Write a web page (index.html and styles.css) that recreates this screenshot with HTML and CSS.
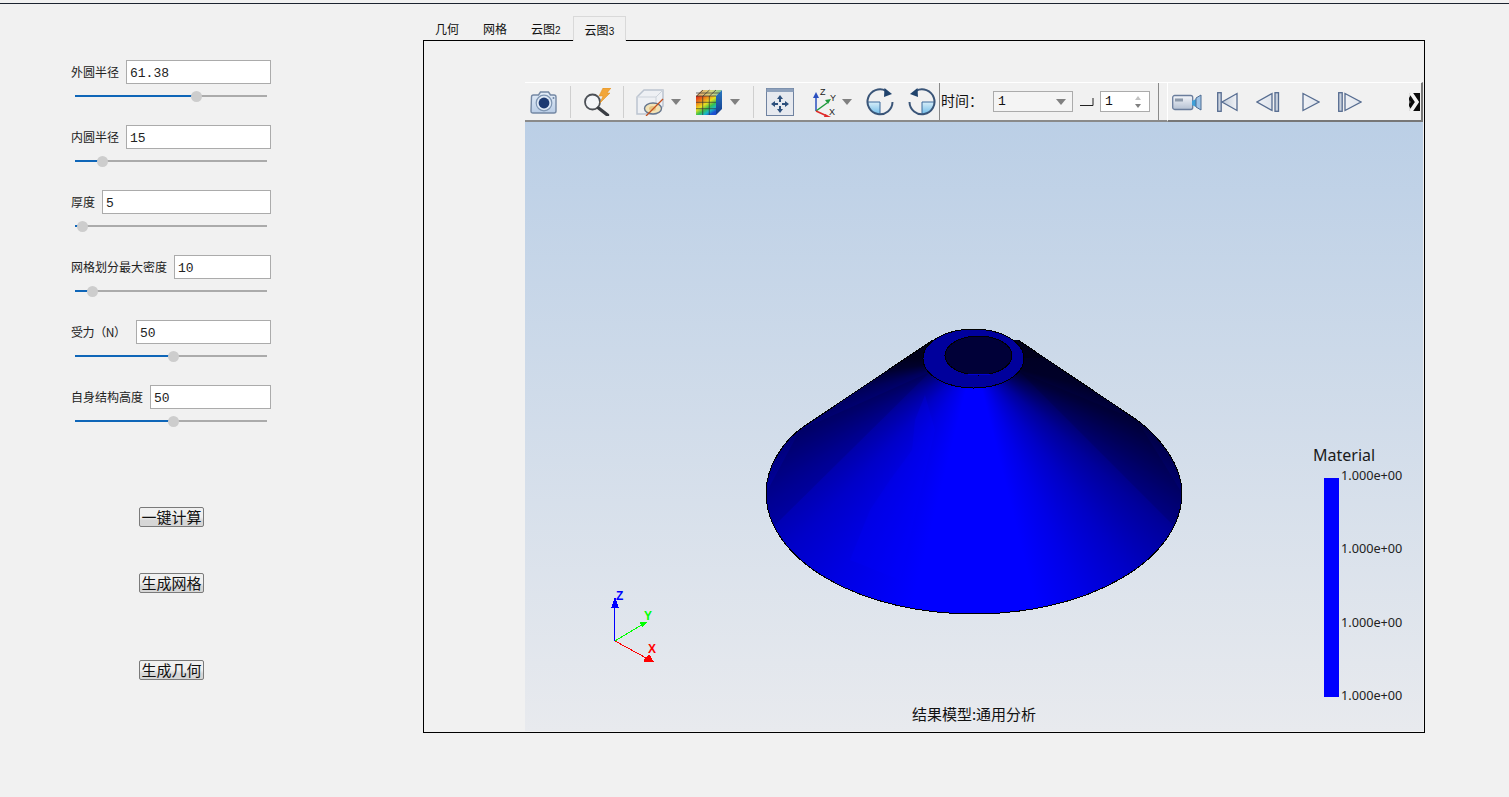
FILE: index.html
```html
<!DOCTYPE html>
<html lang="zh-CN">
<head>
<meta charset="utf-8">
<title>云图</title>
<link rel="stylesheet" href="styles.css">
</head>
<body>
<svg width="0" height="0" class="defs">
  <defs>
    <linearGradient id="gSteel" x1="0" y1="0" x2="0" y2="1"><stop offset="0" stop-color="#f4f6fa"/><stop offset="1" stop-color="#b4c0d2"/></linearGradient>
    <linearGradient id="gBody" x1="0" y1="0" x2="0" y2="1"><stop offset="0" stop-color="#e4edf8"/><stop offset="1" stop-color="#b9cde6"/></linearGradient>
    <linearGradient id="gQuad" x1="0" y1="0" x2="0" y2="1"><stop offset="0" stop-color="#d8eef9"/><stop offset="1" stop-color="#6dbbe8"/></linearGradient>
    <linearGradient id="gBg" x1="0" y1="0" x2="1" y2="0"><stop offset="0" stop-color="#c0cad8"/><stop offset="1" stop-color="#f0f2f6"/></linearGradient>
    <linearGradient id="gBgR" x1="0" y1="0" x2="1" y2="0"><stop offset="0" stop-color="#f0f2f6"/><stop offset="1" stop-color="#dfe4ec"/></linearGradient>
    <linearGradient id="gRain" x1="0" y1="0" x2=".7" y2="1"><stop offset="0" stop-color="#d8201c"/><stop offset=".3" stop-color="#f08a1a"/><stop offset=".5" stop-color="#e8e020"/><stop offset=".7" stop-color="#38c050"/><stop offset=".85" stop-color="#18b8c8"/><stop offset="1" stop-color="#1c50d0"/></linearGradient>
    <linearGradient id="gSide" x1="0" y1="0" x2="0" y2="1"><stop offset="0" stop-color="#2a78c0"/><stop offset="1" stop-color="#123a8c"/></linearGradient>
    <linearGradient id="gTop" x1="0" y1="0" x2="1" y2="0"><stop offset="0" stop-color="#eba060"/><stop offset=".6" stop-color="#d8d880"/><stop offset="1" stop-color="#78c890"/></linearGradient>
    <clipPath id="coneClip"><path d="M933 340L803 427C783 441 766 467 766 493A208 121 0 0 0 1182 493C1182 465 1160 437 1137 420L1018 340Z"/></clipPath>
  </defs>
</svg>
<div class="topline"></div>
<main class="app">
  <aside class="side">
    <section class="field">
      <div class="row"><label class="lbl">外圆半径</label><input class="num" value="61.38"></div>
      <div class="slider"><span class="fill" style="width:121px"></span><span class="thumb" style="left:116px"></span></div>
    </section>
    <section class="field">
      <div class="row"><label class="lbl">内圆半径</label><input class="num" value="15"></div>
      <div class="slider"><span class="fill" style="width:27px"></span><span class="thumb" style="left:22px"></span></div>
    </section>
    <section class="field">
      <div class="row"><label class="lbl">厚度</label><input class="num" value="5"></div>
      <div class="slider"><span class="fill" style="width:7px"></span><span class="thumb" style="left:2px"></span></div>
    </section>
    <section class="field">
      <div class="row"><label class="lbl">网格划分最大密度</label><input class="num" value="10"></div>
      <div class="slider"><span class="fill" style="width:17px"></span><span class="thumb" style="left:12px"></span></div>
    </section>
    <section class="field">
      <div class="row"><label class="lbl lbl-force">受力（N）</label><input class="num" value="50"></div>
      <div class="slider"><span class="fill" style="width:98px"></span><span class="thumb" style="left:93px"></span></div>
    </section>
    <section class="field">
      <div class="row"><label class="lbl">自身结构高度</label><input class="num" value="50"></div>
      <div class="slider"><span class="fill" style="width:98px"></span><span class="thumb" style="left:93px"></span></div>
    </section>
    <div class="actions">
      <button class="btn btn-calc">一键计算</button>
      <button class="btn btn-mesh">生成网格</button>
      <button class="btn btn-geo">生成几何</button>
    </div>
  </aside>

  <div class="work">
    <nav class="tabs">
      <span class="tab">几何</span>
      <span class="tab">网格</span>
      <span class="tab">云图<small>2</small></span>
      <span class="tab active">云图<small>3</small></span>
    </nav>
    <div class="panel">
      <div class="toolbar">
        <div class="tools">
          <svg class="ico ico-camera" viewBox="0 0 28 24"><path d="M1.500 7q0-2 2-2h5l2-3h8l2 3h3.500q2 0 2 2v14q0 2-2 2h-21q-2 0-2-2z" fill="url(#gBody)" stroke="#7488a4" stroke-width="1.400"/><circle cx="14" cy="13" r="7.800" fill="#dfe9f5" stroke="#7e95b2" stroke-width="1.200"/><circle cx="14" cy="13" r="5.400" fill="#1d3a72"/><circle cx="23.500" cy="8" r="1" fill="#6f86a5"/></svg>
          <i class="sep"></i>
          <svg class="ico" viewBox="0 0 28 28"><circle cx="9.500" cy="14" r="7.500" fill="#f3f5f8" stroke="#4c5056" stroke-width="1.800"/><path d="M15.500 20l9 7" stroke="#3a3e44" stroke-width="3.400" stroke-linecap="round"/><path d="M20 0h8l-4 5h3L17 15l3-7h-4z" fill="#f2a63a" stroke="#dd8a18" stroke-width=".5"/></svg>
          <i class="sep"></i>
          <svg class="ico" viewBox="0 0 28 28"><path d="M1 9l7-7h19v16l-7 8H1z" fill="#eef0f4" stroke="#bcc4d0" stroke-width="1.500"/><path d="M1 9h19v17M20 9l7-7" fill="none" stroke="#ccd2da"/><ellipse cx="17" cy="20.500" rx="8.500" ry="5.500" fill="#f2e2b6" stroke="#66768e" stroke-width="1.400"/><ellipse cx="16.500" cy="20.500" rx="3.500" ry="2.500" fill="#e7c484"/><path d="M10 28L27 11" stroke="#c4501e" stroke-width="1.300"/></svg>
          <svg class="drop" viewBox="0 0 10 6"><path d="M0 0h10L5 6z"/></svg>
          <svg class="ico ico-color" viewBox="0 0 28 28"><path d="M1 8l6-6h20l-6 6z" fill="url(#gTop)"/><path d="M21 8l6-6v19l-6 6z" fill="url(#gSide)"/><rect x="1" y="8" width="20" height="19" fill="url(#gRain)"/><path d="M7.700 8v19M14.300 8v19M1 14.300h20M1 20.700h20M1 8h20M8 2L1.700 8M14.500 2L8 8M21 2l-6.500 6M1 5h24" stroke="#333" stroke-width=".7" fill="none"/></svg>
          <svg class="drop" viewBox="0 0 10 6"><path d="M0 0h10L5 6z"/></svg>
          <i class="sep sep-wide"></i>
          <svg class="ico ico-fit" viewBox="0 0 28 28"><rect x=".5" y=".5" width="27" height="27" fill="#e6e9ef" stroke="#6f82a0"/><rect x=".5" y=".5" width="27" height="3.500" fill="#8ea1bc"/><path d="M14 7l-3 4h2v3h2v-3h2zM14 25l3-4h-2v-3h-2v3h-2zM5 16l4 3v-2h3v-2H9v-2zM23 16l-4-3v2h-3v2h3v2z" fill="#2c4f7c"/></svg>
          <svg class="ico ico-axes" viewBox="0 0 26 30"><path d="M5 24V10" stroke="#2a4fc0" stroke-width="1.500"/><path d="M5 5l-3 6h6z" fill="#2a4fc0"/><path d="M5 24l11-8" stroke="#1f9a3c" stroke-width="1.500"/><path d="M20 12l-6 1 3 4z" fill="#1f9a3c"/><path d="M5 24l11 5" stroke="#e02a2a" stroke-width="1.500"/><path d="M20 30l-6-3-1 3z" fill="#e02a2a"/><text x="9" y="8" class="axis-mini">Z</text><text x="19" y="14" class="axis-mini">Y</text><text x="18" y="28" class="axis-mini">X</text></svg>
          <svg class="drop drop-axes" viewBox="0 0 10 6"><path d="M0 0h10L5 6z"/></svg>
          <svg class="ico ico-rot" viewBox="0 0 28 28"><path d="M14 14H1.500A12.500 12.500 0 0 0 14 26.500z" fill="url(#gQuad)"/><path d="M1.500 14H14V26.500" fill="none" stroke="#3c6a9c"/><path d="M20 2.800A12.500 12.500 0 1 0 26.500 14" fill="none" stroke="#3a5578" stroke-width="2"/><path d="M26 6l-8 3 .5-9z" fill="#20436c"/></svg>
          <svg class="ico ico-rot" viewBox="0 0 28 28"><path d="M14 14h12.500A12.500 12.500 0 0 1 14 26.500z" fill="url(#gQuad)"/><path d="M26.500 14H14V26.500" fill="none" stroke="#3c6a9c"/><path d="M8 2.800A12.500 12.500 0 1 1 1.500 14" fill="none" stroke="#3a5578" stroke-width="2"/><path d="M2 6l8 3-.5-9z" fill="#20436c"/></svg>
        </div>
        <i class="sep-dark"></i>
        <div class="time">
          <span class="time-lbl">时间：</span>
          <div class="combo"><span>1</span><svg class="drop drop-in" viewBox="0 0 10 6"><path d="M0 0h10L5 6z"/></svg></div>
          <svg class="corner" viewBox="0 0 14 8"><path d="M0 7.500h13V0" fill="none" stroke="#222" stroke-width="1"/></svg>
          <div class="spin"><span>1</span><svg class="updown" viewBox="0 0 8 14"><path d="M4 1l3 4H1z" fill="#c2c2c2"/><path d="M4 13l3-4H1z" fill="#808080"/></svg></div>
        </div>
        <i class="sep-dark sep-end"></i>
        <div class="player">
          <svg class="ico ico-cam" viewBox="0 0 30 18"><rect x=".7" y="2.500" width="20" height="14" rx="2" fill="url(#gSteel)" stroke="#6a7d9c" stroke-width="1.300"/><rect x="3" y="5.500" width="8" height="3" fill="#8c99aa"/><path d="M20 8l4-2v8l-4-2z" fill="#3fa0d8"/><path d="M24 5l5-3v15l-5-3z" fill="#9ec3e6" stroke="#4f6c92"/></svg>
          <svg class="nav nav-first" viewBox="0 0 21 20"><rect x=".7" y=".7" width="3.500" height="18.600" fill="#c9d2de" stroke="#566c90" stroke-width="1.300"/><path d="M20 1.500v17L5 10z" fill="url(#gBg)" stroke="#566c90" stroke-width="1.300"/></svg>
          <svg class="nav nav-prev" viewBox="0 0 24 20"><path d="M16 1.500v17L1 10z" fill="url(#gBgR)" stroke="#566c90" stroke-width="1.300"/><rect x="19" y=".7" width="3.500" height="18.600" fill="#c9d2de" stroke="#566c90" stroke-width="1.300"/></svg>
          <svg class="nav nav-play" viewBox="0 0 18 20"><path d="M1 1.500v17L17 10z" fill="url(#gBgR)" stroke="#566c90" stroke-width="1.300"/></svg>
          <svg class="nav nav-next" viewBox="0 0 24 20"><rect x=".7" y=".7" width="3.500" height="18.600" fill="#c9d2de" stroke="#566c90" stroke-width="1.300"/><path d="M7 1.500v17L23 10z" fill="url(#gBgR)" stroke="#566c90" stroke-width="1.300"/></svg>
          <svg class="more" viewBox="0 0 11 18"><rect width="11" height="18" fill="#0c0c0c"/><path d="M0 0h3L0 5zM0 18h3l-3-5z" fill="#d8d8d8"/><path d="M0 7l2 2-2 2z" fill="#666"/><path d="M2 0l6 9-6 9" fill="none" stroke="#f4f4f4" stroke-width="3.600"/></svg>
        </div>
      </div>

      <div class="view">
        <div class="cone-shade"></div>
        <svg class="scene" viewBox="525 122 898 609">
          <g clip-path="url(#coneClip)">
            <path d="M930 372L800 430L766 493L772 528Z" class="facet-dark"/>
            <path d="M925 395L915 420L912 450L890 480L870 510L850 560L900 580L935 430Z" class="facet-light"/>
            <path d="M1020 372L1137 420L1182 493L1176 528Z" class="facet-dark"/>
          </g>
          <g class="mesh">
            <path d="M933 340L803 427C783 441 766 467 766 493A208 121 0 0 0 1182 493C1182 465 1160 437 1137 420L1018 340" fill="none" stroke="#000" stroke-width="1"/>
            <ellipse cx="973.500" cy="358.500" rx="50.500" ry="29.500" fill="#00009c" stroke="#000"/>
            <ellipse cx="978.500" cy="355.500" rx="33.500" ry="19.500" fill="#000038" stroke="#000"/>
            <path d="M968 374q10 1 22 0" fill="none" stroke="#0000d0"/>
          </g>
          <g class="triad">
            <path d="M614.500 641V604" stroke="#0000ff" stroke-width="1.200"/>
            <path d="M615 597l-4 11h8z" fill="#0000ff"/>
            <path d="M615 641l28-17" stroke="#00ff00"/>
            <path d="M647 622l-8-.500 3 6z" fill="#00ff00"/>
            <path d="M615 641l33 18" stroke="#ff0000"/>
            <path d="M654 662l-5-8-5 5v3z" fill="#ff0000"/>
          </g>
          <text x="616" y="600" class="ax ax-z">Z</text>
          <text x="644" y="620" class="ax ax-y">Y</text>
          <text x="648" y="653" class="ax ax-x">X</text>
        </svg>
        <div class="legend">
          <div class="legend-title">Material</div>
          <div class="legend-body">
            <div class="legend-bar"></div>
            <div class="legend-ticks">
              <span>1.000e+00</span><span>1.000e+00</span><span>1.000e+00</span><span>1.000e+00</span>
            </div>
          </div>
        </div>
        <div class="caption">结果模型:通用分析</div>
      </div>
    </div>
  </div>
</main>
</body>
</html>
```

FILE: styles.css
```css
* { box-sizing: border-box; }
html, body { margin: 0; height: 100%; overflow: hidden; }
body {
  background: #f1f1f1;
  color: #111;
  font-family: "Noto Sans CJK SC", "Liberation Sans", sans-serif;
  padding-top: 3px;
}
.defs { position: absolute; }
.topline { height: 1px; background: #1c2430; }
.app { display: flex; align-items: flex-start; }

/* left form */
.side { width: 423px; flex: none; padding: 56px 0 0 71px; display: flex; flex-direction: column; }
.field { width: 200px; margin-bottom: 23px; }
.row { display: flex; align-items: center; gap: 7px; height: 24px; }
.lbl { font-size: 12px; line-height: 24px; white-space: nowrap; color: #222; }
.lbl-force { width: 58px; letter-spacing: -.4px; }
.num {
  flex: 1; min-width: 0; height: 24px; padding: 2px 3px 0;
  border: 1px solid #ababab; border-radius: 0; background: #fff; outline: none;
  font-family: "Liberation Mono", monospace; font-size: 13px; color: #222;
}
.slider { position: relative; width: 192px; height: 11px; margin: 7px 0 0 4px; }
.slider::before { content: ""; position: absolute; left: 0; right: 0; top: 4px; height: 2px; background: #ababab; }
.fill { position: absolute; left: 0; top: 4px; height: 2px; background: #0f66b8; }
.thumb { position: absolute; top: 0; width: 11px; height: 11px; border-radius: 50%; background: #cdcdcd; }

.actions { display: flex; flex-direction: column; align-items: flex-start; padding-left: 68px; }
.btn {
  width: 65px; height: 20px; padding: 0;
  border: 1px solid #7a7a7a; border-radius: 2px;
  background: linear-gradient(#f0f0f0 0 50%, #d6d6d6 70%);
  font: 15px/18px "Noto Sans CJK SC", sans-serif; color: #111;
}
.btn-calc { margin-top: 57px; }
.btn-mesh { margin-top: 46px; }
.btn-geo { margin-top: 67px; }

/* tabs + panel */
.work { width: 1002px; flex: none; margin-top: 12px; }
.tabs { display: flex; align-items: flex-end; height: 24px; }
.tab { height: 22px; padding: 0 12px; font-size: 12px; line-height: 22px; white-space: nowrap; }
.tab small { font-family: "Liberation Sans", sans-serif; font-size: 10px; }
.tab.active { height: 25px; margin-bottom: -1px; position: relative; z-index: 1; padding: 0 11px; line-height: 25px; background: #f1f1f1; border: 1px solid #d9d9d9; border-bottom: 0; }
.panel {
  height: 693px; border: 1px solid #000; padding: 41px 1px 1px 101px;
  display: flex; flex-direction: column; background: #f1f1f1;
}

/* toolbar */
.toolbar { height: 40px; flex: none; display: flex; align-items: stretch; border-top: 1px solid #fff; border-bottom: 2px solid #8a8a8a; }
.tools { display: flex; align-items: center; width: 414px; padding-left: 5px; }
.ico { width: 28px; height: 28px; flex: none; display: block; }
.ico-camera { height: 24px; }
.sep { width: 1px; height: 32px; background: #cfcfcf; margin: 0 12px; flex: none; }
.sep-wide { margin-left: 13px; }
.drop { width: 10px; height: 6px; flex: none; margin-left: 7px; fill: #808080; }
.ico-color { margin-left: 14px; }
.ico-axes { width: 26px; height: 30px; margin-left: 17px; }
.axis-mini { font: 9px "Liberation Sans", sans-serif; fill: #222; }
.drop-axes { margin-left: 5px; }
.ico-rot { margin-left: 14px; }
.sep-dark { width: 1px; background: #8a8a8a; flex: none; }
.time { display: flex; align-items: center; width: 218px; padding-left: 1px; font-size: 14px; }
.time-lbl { width: 52px; flex: none; white-space: nowrap; padding-bottom: 3px; }
.combo, .spin {
  height: 21px; border: 1px solid #ababab; background: #f4f4f4;
  display: flex; align-items: center; justify-content: space-between;
  font: 13px "Liberation Mono", monospace;
}
.combo { width: 80px; padding: 0 6px 0 4px; }
.drop-in { margin: 0; }
.corner { width: 14px; height: 8px; margin: 0 6px 0 7px; flex: none; }
.spin { width: 50px; padding: 0 7px 0 4px; background: #fff; }
.updown { width: 8px; height: 14px; }
.player {
  margin: -1px 0 -2px 8px; flex: 1; display: flex; align-items: center;
  padding-left: 4px; border-top: 1px solid #fff; border-left: 1px solid #fff;
  border-right: 2px solid #777; border-bottom: 2px solid #777;
}
.ico-cam { width: 30px; height: 18px; }
.nav { height: 20px; flex: none; display: block; }
.nav-first { width: 21px; margin-left: 15px; }
.nav-prev { width: 24px; margin-left: 18px; }
.nav-play { width: 18px; margin-left: 22px; }
.nav-next { width: 24px; margin-left: 18px; }
.more { width: 11px; height: 18px; margin-left: auto; margin-right: 1px; filter: blur(.4px); }

/* 3D view */
.view {
  flex: 1; position: relative; overflow: hidden;
  background: linear-gradient(#bbcfe6, #e8eaee);
}
.scene { position: absolute; inset: 0; width: 100%; height: 100%; }
.cone-shade {
  position: absolute; inset: 0;
  background: conic-gradient(from 90deg at 449px 236px,
    #000024 0deg, #000028 14deg, #000040 22deg, #00006c 32deg, #00009c 42deg, #0000c6 54deg, #0000e8 66deg, #0000ff 76deg,
    #0000ff 104deg, #0000e2 122deg, #0000c8 134deg, #0000a0 146deg, #000078 156deg, #00005a 164deg, #00002c 172deg, #00001c 180deg, #00001c 360deg);
  clip-path: path("M408 218L278 305C258 319 241 345 241 371A208 121 0 0 0 657 371C657 343 635 315 612 298L493 218Z");
}
.facet-dark { fill: #000; opacity: .1; }
.facet-light { fill: #00f; opacity: .2; }
.mesh, .triad { shape-rendering: crispEdges; }
.ax { font: bold 12px "Liberation Sans", sans-serif; }
.ax-z { fill: #0000ff; }
.ax-y { fill: #00ff00; }
.ax-x { fill: #ff0000; }

.legend { position: absolute; left: 788px; top: 323px; width: 100px; }
.legend-title { font: 16px/20px "Noto Sans", "Liberation Sans", sans-serif; color: #1a1a1a; }
.legend-body { display: flex; margin: 13px 0 0 11px; }
.legend-bar { width: 15px; height: 219px; background: #0000ff; }
.legend-ticks {
  height: 234px; margin: -10px 0 0 2px; display: flex; flex-direction: column; justify-content: space-between;
  font: 12.700px/14px "Noto Sans", "Liberation Sans", sans-serif; color: #222; white-space: nowrap;
}
.caption {
  position: absolute; left: 0; right: 0; bottom: 7px; text-align: center;
  font-size: 15px; line-height: 20px; color: #111;
}
```
